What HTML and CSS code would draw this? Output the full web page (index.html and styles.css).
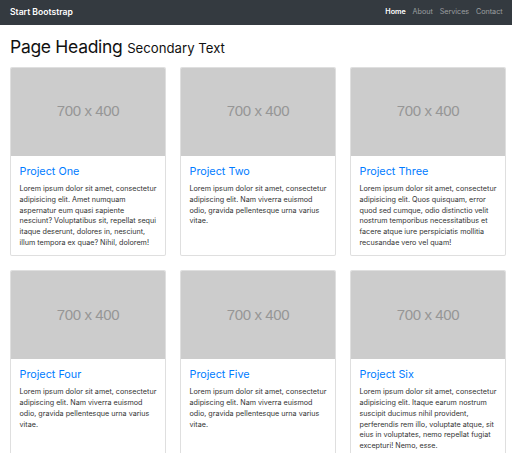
FILE: index.html
```html
<!DOCTYPE html>
<html lang="en">
<head>
<meta charset="utf-8">
<title>Start Bootstrap</title>
<link rel="stylesheet" href="styles.css">
</head>
<body>
<nav class="navbar">
  <div class="nav-inner">
    <a class="brand" href="#">Start Bootstrap</a>
    <ul class="nav-links">
      <li><a class="nav-link active" href="#">Home</a></li>
      <li><a class="nav-link" href="#">About</a></li>
      <li><a class="nav-link" href="#">Services</a></li>
      <li><a class="nav-link" href="#">Contact</a></li>
    </ul>
  </div>
</nav>
<main class="container">
  <h1 class="page-heading">Page Heading <small>Secondary Text</small></h1>
  <div class="grid">
    <div class="card">
      <div class="placeholder">700 x 400</div>
      <div class="card-body">
        <h4 class="card-title"><a href="#">Project One</a></h4>
        <p class="card-text">Lorem ipsum dolor sit amet, consectetur adipisicing elit. Amet numquam aspernatur eum quasi sapiente nesciunt? Voluptatibus sit, repellat sequi itaque deserunt, dolores in, nesciunt, illum tempora ex quae? Nihil, dolorem!</p>
      </div>
    </div>
    <div class="card">
      <div class="placeholder">700 x 400</div>
      <div class="card-body">
        <h4 class="card-title"><a href="#">Project Two</a></h4>
        <p class="card-text">Lorem ipsum dolor sit amet, consectetur adipiscing elit. Nam viverra euismod odio, gravida pellentesque urna varius vitae.</p>
      </div>
    </div>
    <div class="card">
      <div class="placeholder">700 x 400</div>
      <div class="card-body">
        <h4 class="card-title"><a href="#">Project Three</a></h4>
        <p class="card-text">Lorem ipsum dolor sit amet, consectetur adipisicing elit. Quos quisquam, error quod sed cumque, odio distinctio velit nostrum temporibus necessitatibus et facere atque iure perspiciatis mollitia recusandae vero vel quam!</p>
      </div>
    </div>
    <div class="card">
      <div class="placeholder">700 x 400</div>
      <div class="card-body">
        <h4 class="card-title"><a href="#">Project Four</a></h4>
        <p class="card-text">Lorem ipsum dolor sit amet, consectetur adipiscing elit. Nam viverra euismod odio, gravida pellentesque urna varius vitae.</p>
      </div>
    </div>
    <div class="card">
      <div class="placeholder">700 x 400</div>
      <div class="card-body">
        <h4 class="card-title"><a href="#">Project Five</a></h4>
        <p class="card-text">Lorem ipsum dolor sit amet, consectetur adipiscing elit. Nam viverra euismod odio, gravida pellentesque urna varius vitae.</p>
      </div>
    </div>
    <div class="card">
      <div class="placeholder">700 x 400</div>
      <div class="card-body">
        <h4 class="card-title"><a href="#">Project Six</a></h4>
        <p class="card-text">Lorem ipsum dolor sit amet, consectetur adipisicing elit. Itaque earum nostrum suscipit ducimus nihil provident, perferendis rem illo, voluptate atque, sit eius in voluptates, nemo repellat fugiat excepturi! Nemo, esse.</p>
      </div>
    </div>
  </div>
</main>
</body>
</html>
```
FILE: styles.css
```css
* { box-sizing: border-box; }
html, body { margin: 0; padding: 0; }
body {
  font-family: Inter, "Liberation Sans", Arial, sans-serif;
  font-size: 7.2px;
  line-height: 1.5;
  color: #212529;
  background: #fff;
  overflow: hidden;
}
a { text-decoration: none; }

.navbar {
  background: #343a40;
  height: 25px;
  display: flex;
  align-items: center;
}
.nav-inner {
  flex: 1;
  display: flex;
  align-items: center;
  justify-content: space-between;
  padding: 0 6px 0 10px;
}
.brand {
  color: #fff;
  font-size: 8.6px;
  font-weight: 600;
}
.nav-links {
  list-style: none;
  margin: 0;
  padding: 0;
  display: flex;
}
.nav-link {
  display: block;
  padding: 0 3.4px;
  color: rgba(255,255,255,0.5);
  font-size: 7.2px;
}
.nav-link.active { color: #fff; font-weight: 600; }

.container {
  padding: 0 6px 0 10px;
}
.page-heading {
  margin: 11px 0 9px;
  font-size: 17.5px;
  font-weight: normal;
  line-height: 21.6px;
  color: #111;
  letter-spacing: -0.3px;
}
.page-heading small {
  font-size: 13.2px;
  font-weight: normal;
  line-height: 1;
  letter-spacing: 0;
}

.grid {
  display: grid;
  grid-template-columns: repeat(3, 156px);
  column-gap: 14px;
  row-gap: 14px;
}
.card {
  border: 1px solid rgba(0,0,0,0.125);
  border-radius: 2px;
  overflow: hidden;
  background: #fff;
  display: flex;
  flex-direction: column;
}
.placeholder {
  height: 88px;
  background: #cccccc;
  color: #969696;
  font-family: "Liberation Sans", Arial, sans-serif;
  font-size: 15px;
  letter-spacing: -0.4px;
  display: flex;
  align-items: center;
  justify-content: center;
}
.card-body {
  padding: 10.5px 8.5px 6px;
  flex: 1;
}
.card-title {
  margin: 0 0 5px;
  font-size: 10.8px;
  font-weight: normal;
  line-height: 1.2;
}
.card-title a { color: #007bff; }
.card-text {
  margin: 0;
  line-height: 10.8px;
  color: #333;
}
```
